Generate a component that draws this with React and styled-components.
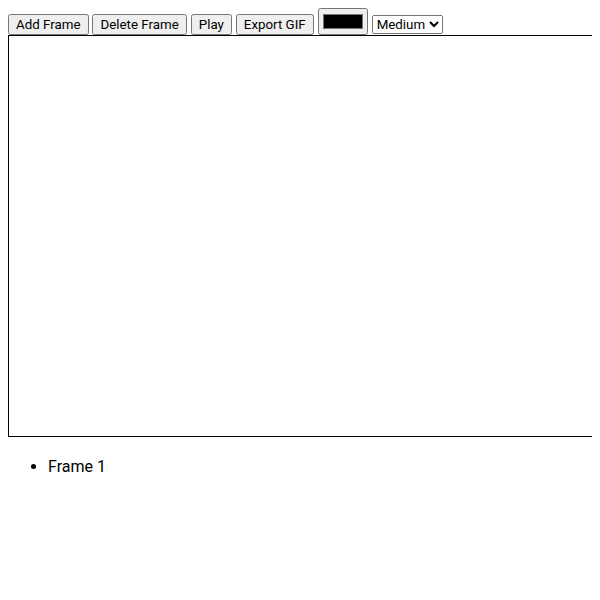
import React, { useState } from 'react'
import styled, { createGlobalStyle } from 'styled-components'

const GlobalStyle = createGlobalStyle`
  body {
    margin: 8px;
    font-family: Roboto, "Liberation Sans", sans-serif;
    background: #fff;
    color: #000;
  }
`

const Toolbar = styled.div``

const ToolButton = styled.button`
  font-family: Roboto, "Liberation Sans", sans-serif;
  font-size: 13.333px;
`

const ColorInput = styled.input`
  font-family: Roboto, "Liberation Sans", sans-serif;
`

const SizeSelect = styled.select`
  font-family: Roboto, "Liberation Sans", sans-serif;
  font-size: 13.333px;
`

const DrawCanvas = styled.canvas`
  border: 1px solid black;
`

const FrameList = styled.ul``

export default function App() {
  const [frames] = useState(['Frame 1'])
  const [color, setColor] = useState('#000000')
  const [size, setSize] = useState('medium')

  return (
    <>
      <GlobalStyle />
      <Toolbar>
        <ToolButton>Add Frame</ToolButton> <ToolButton>Delete Frame</ToolButton>{' '}
        <ToolButton>Play</ToolButton> <ToolButton>Export GIF</ToolButton>{' '}
        <ColorInput type="color" value={color} onChange={e => setColor(e.target.value)} />{' '}
        <SizeSelect value={size} onChange={e => setSize(e.target.value)}>
          <option value="small">Small</option>
          <option value="medium">Medium</option>
          <option value="large">Large</option>
        </SizeSelect>
      </Toolbar>
      <DrawCanvas width={800} height={400} />
      <FrameList>
        {frames.map(f => (
          <li key={f}>{f}</li>
        ))}
      </FrameList>
    </>
  )
}
